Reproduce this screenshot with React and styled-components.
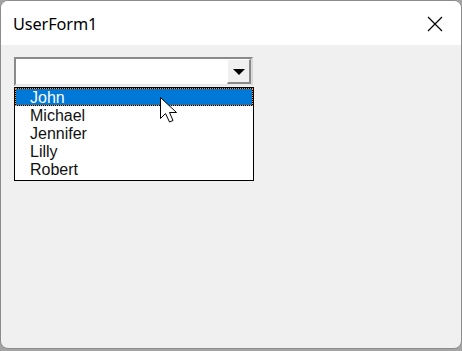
import React from "react";
import styled, { createGlobalStyle } from "styled-components";

const Global = createGlobalStyle`
  html, body { margin: 0; padding: 0; }
  body { background: #a4a4a4; width: 462px; height: 351px; overflow: hidden; }
`;

const Window = styled.div`
  position: relative;
  box-sizing: border-box;
  width: 462px;
  height: 349px;
  border: 1px solid #8c8c8c;
  border-radius: 8px;
  overflow: hidden;
  background: #f0f0f0;
  display: flex;
  flex-direction: column;
`;

const TitleBar = styled.div`
  height: 44px;
  flex: none;
  background: #ffffff;
  display: flex;
  align-items: center;
  justify-content: space-between;
  padding: 0 18px 0 12px;
`;

const Title = styled.span`
  font-family: "Noto Sans", "Segoe UI", sans-serif;
  font-size: 16.3px;
  color: #000;
  letter-spacing: -0.1px;
  margin-top: 1px;
`;

const CloseButton = styled.div`
  width: 16px;
  height: 16px;
  display: flex;
  margin-top: 1px;
`;

const Body = styled.div`
  flex: 1;
  padding: 12px 13px;
`;

const Combo = styled.div`
  width: 240px;
  display: flex;
  flex-direction: column;
`;

const Field = styled.div`
  box-sizing: border-box;
  width: 239px;
  height: 29px;
  background: #fff;
  border-top: 2px solid #8a8a8a;
  border-left: 2px solid #8a8a8a;
  border-right: 2px solid #d8d8d8;
  border-bottom: 2px solid #e8e8e8;
  display: flex;
  justify-content: flex-end;
`;

const DropButton = styled.div`
  box-sizing: border-box;
  width: 24px;
  height: 100%;
  background: #f0f0f0;
  border-top: 1px solid #ffffff;
  border-left: 1px solid #ffffff;
  border-right: 2px solid #8a8a8a;
  border-bottom: 2px solid #8a8a8a;
  display: flex;
  align-items: center;
  justify-content: center;
`;

const Arrow = styled.div`
  width: 0;
  height: 0;
  border-left: 6px solid transparent;
  border-right: 6px solid transparent;
  border-top: 6px solid #000;
  margin-top: 1px;
`;

const List = styled.div`
  box-sizing: border-box;
  width: 240px;
  margin-top: 1px;
  padding-bottom: 2px;
  border: 1px solid #000;
  background: #fff;
  display: flex;
  flex-direction: column;
`;

const Item = styled.div`
  box-sizing: border-box;
  height: 18px;
  padding-left: 14px;
  font-family: "Liberation Sans", Arial, sans-serif;
  font-size: 16px;
  line-height: 17px;
  color: ${(p) => (p.$selected ? "#fff" : "#111")};
  border: 1px solid transparent;
  background: ${(p) =>
    p.$selected
      ? "linear-gradient(#0078d7, #0078d7) padding-box, #000 border-box"
      : "transparent"};
  border-style: ${(p) => (p.$selected ? "dotted" : "solid")};
  border-color: ${(p) => (p.$selected ? "#ff9a2e" : "transparent")};
`;

const Cursor = styled.svg`
  position: absolute;
  left: 159px;
  top: 96px;
`;

const names = ["John", "Michael", "Jennifer", "Lilly", "Robert"];

export default function App() {
  return (
    <>
      <Global />
      <Window>
        <TitleBar>
          <Title>UserForm1</Title>
          <CloseButton>
            <svg width="16" height="16" viewBox="0 0 16 16">
              <path d="M1 1 L15 15 M15 1 L1 15" stroke="#000" strokeWidth="1.2" fill="none" />
            </svg>
          </CloseButton>
        </TitleBar>
        <Body>
          <Combo>
            <Field>
              <DropButton>
                <Arrow />
              </DropButton>
            </Field>
            <List>
              {names.map((n, i) => (
                <Item key={n} $selected={i === 0}>
                  {n}
                </Item>
              ))}
            </List>
          </Combo>
        </Body>
        <Cursor width="21" height="28" viewBox="0 0 21 28">
          <path
            d="M0.5 0.5 L0.5 21.5 L5.5 16.5 L9.5 25 L13 23.5 L9.5 15.5 L16.5 15.5 Z"
            fill="#fff"
            stroke="#000"
            strokeWidth="1"
            strokeLinejoin="miter"
          />
        </Cursor>
      </Window>
    </>
  );
}
